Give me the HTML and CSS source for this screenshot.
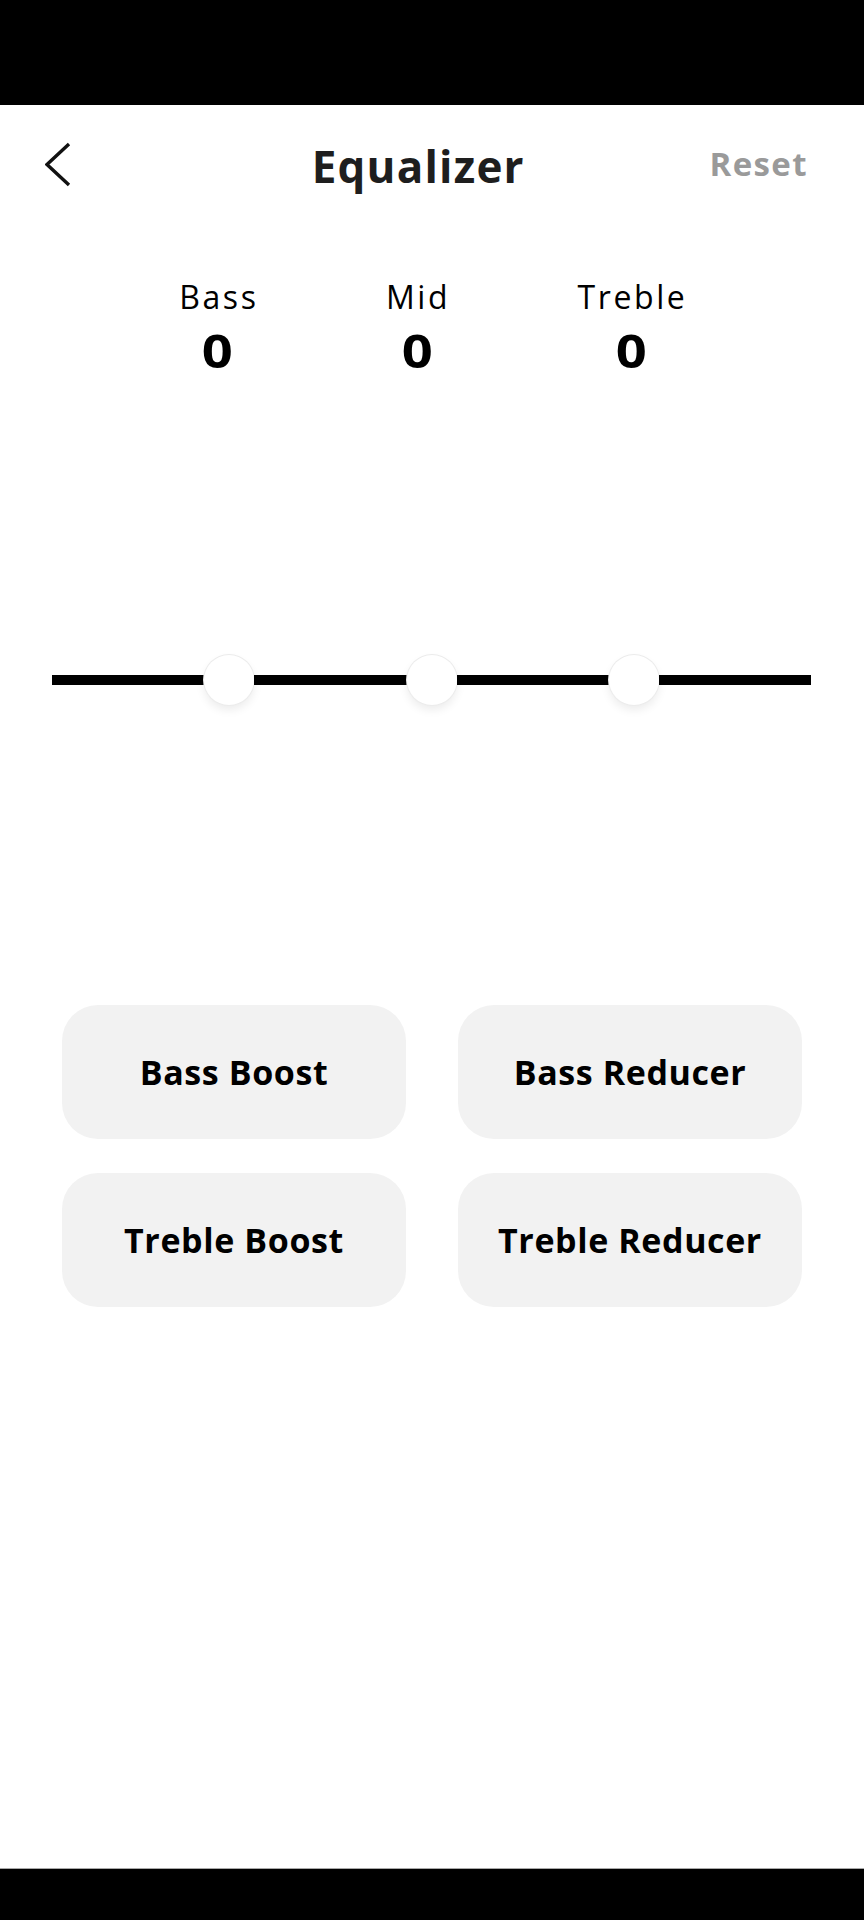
FILE: index.html
```html
<!DOCTYPE html>
<html lang="en">
<head>
<meta charset="utf-8">
<title>Equalizer</title>
<link rel="stylesheet" href="styles.css">
</head>
<body>
<div class="phone">
  <div class="status-bar"></div>
  <main class="screen">
    <header class="header">
      <button class="back" aria-label="Back">
        <svg width="28" height="46" viewBox="0 0 28 46"><path d="M24 2 L2 22.5 L24 43" fill="none" stroke="#111" stroke-width="3.4" stroke-linejoin="miter"/></svg>
      </button>
      <h1 class="title">Equalizer</h1>
      <button class="reset">Reset</button>
    </header>

    <section class="levels">
      <div class="level"><span class="level-name">Bass</span><span class="level-value">0</span></div>
      <div class="level"><span class="level-name">Mid</span><span class="level-value">0</span></div>
      <div class="level"><span class="level-name">Treble</span><span class="level-value">0</span></div>
    </section>

    <section class="slider">
      <span class="seg"></span>
      <span class="knob"></span>
      <span class="seg"></span>
      <span class="knob"></span>
      <span class="seg"></span>
      <span class="knob"></span>
      <span class="seg"></span>
    </section>

    <section class="presets">
      <button class="preset">Bass Boost</button>
      <button class="preset">Bass Reducer</button>
      <button class="preset">Treble Boost</button>
      <button class="preset">Treble Reducer</button>
    </section>
  </main>
  <div class="nav-bar"></div>
</div>
</body>
</html>
```

FILE: styles.css
```css
* { box-sizing: border-box; }

html, body {
  margin: 0;
  padding: 0;
  background: #fff;
}

body {
  font-family: "Open Sans", "Liberation Sans", sans-serif;
  color: #000;
}

.phone {
  width: 864px;
  height: 1920px;
  display: flex;
  flex-direction: column;
}

.status-bar {
  height: 105px;
  background: #000;
  flex: none;
}

.screen {
  flex: 1;
  display: flex;
  flex-direction: column;
  background: #fff;
}

.header {
  height: 124px;
  display: flex;
  align-items: center;
}

.back {
  width: 123px;
  height: 46px;
  padding: 0 0 0 45px;
  margin: -4px 0 0 0;
  border: 0;
  background: none;
  display: flex;
  align-items: center;
}

.title {
  flex: 1;
  margin: -2px 0 0 0;
  padding-left: 4px;
  text-align: center;
  font-size: 44px;
  line-height: 1;
  font-weight: 700;
  color: #1e1e1e;
  letter-spacing: 1.2px;
}

.reset {
  border: 0;
  background: none;
  padding: 0 56px 0 0;
  margin: -8px 0 0 0;
  font-family: inherit;
  font-size: 33px;
  line-height: 1;
  font-weight: 700;
  color: #9a9a9a;
  letter-spacing: 1.4px;
}

.levels {
  margin-top: 52px;
  display: flex;
  justify-content: center;
  gap: 130px;
}

.level {
  display: flex;
  flex-direction: column;
  align-items: center;
}

.level-name {
  font-size: 32px;
  line-height: 1;
  letter-spacing: 2.6px;
  margin-right: -2.6px;
  font-weight: 400;
  color: #000;
}

.level-value {
  margin-top: 14px;
  font-size: 46px;
  line-height: 1;
  font-weight: 700;
  color: #000;
  transform: scaleX(1.18);
}

.slider {
  margin-top: 281px;
  height: 52px;
  padding: 0 53px 0 52px;
  display: flex;
  align-items: center;
}

.seg {
  flex: 1;
  height: 10px;
  background: #000;
}

.knob {
  flex: none;
  width: 50px;
  height: 50px;
  border-radius: 50%;
  background: #fff;
  box-shadow: 0 0 0 1px #ececec, 0 5px 10px rgba(0, 0, 0, 0.08);
}

.presets {
  margin-top: 299px;
  padding: 0 62px;
  display: grid;
  grid-template-columns: 344px 344px;
  grid-auto-rows: 134px;
  column-gap: 52px;
  row-gap: 34px;
}

.preset {
  border: 0;
  border-radius: 36px;
  background: #f2f2f2;
  font-family: inherit;
  font-size: 34px;
  font-weight: 700;
  color: #000;
  letter-spacing: 0.6px;
  padding: 0;
}

.nav-bar {
  height: 52px;
  flex: none;
  background: #000;
  border-top: 1px solid #a8a8a8;
}
```
